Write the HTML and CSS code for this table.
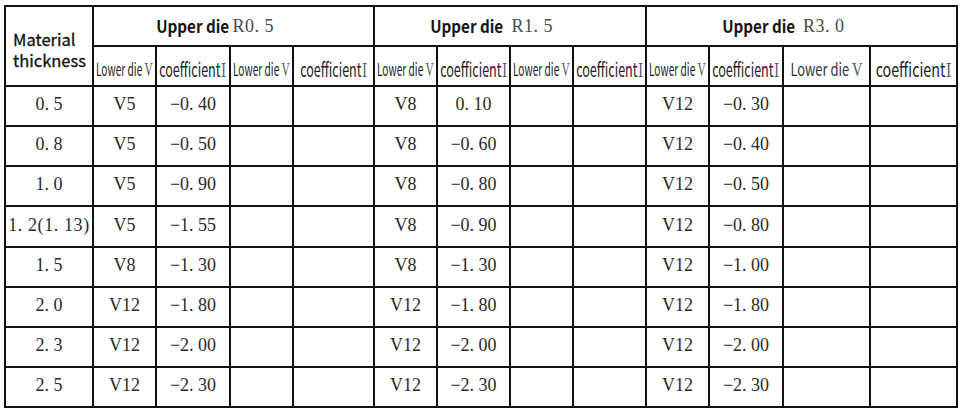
FILE: index.html
```html
<!DOCTYPE html>
<html lang="en">
<head>
<meta charset="utf-8">
<title>Upper die coefficient table</title>
<link rel="stylesheet" href="styles.css">
</head>
<body>
<div class="sheet">
  <div class="cell corner"><div class="corner-text"><div>Material</div><div>thickness</div></div></div>
  <div class="cell top g1"><span class="up">Upper die</span><span class="r">R0. 5</span></div>
  <div class="cell top g2"><span class="up">Upper die</span><span class="r">&nbsp;R1. 5</span></div>
  <div class="cell top g3"><span class="up">Upper die</span><span class="r">&nbsp;R3. 0</span></div>

  <div class="cell sub"><span class="lw">Lower die <i>V</i></span></div>
  <div class="cell sub"><span class="cf">coefficient<i>Ⅰ</i></span></div>
  <div class="cell sub"><span class="lw">Lower die <i>V</i></span></div>
  <div class="cell sub"><span class="cf">coefficient<i>Ⅰ</i></span></div>
  <div class="cell sub"><span class="lw">Lower die <i>V</i></span></div>
  <div class="cell sub"><span class="cf">coefficient<i>Ⅰ</i></span></div>
  <div class="cell sub"><span class="lw">Lower die <i>V</i></span></div>
  <div class="cell sub"><span class="cf">coefficient<i>Ⅰ</i></span></div>
  <div class="cell sub"><span class="lw">Lower die <i>V</i></span></div>
  <div class="cell sub"><span class="cf">coefficient<i>Ⅰ</i></span></div>
  <div class="cell sub wide"><span class="lw">Lower die <i>V</i></span></div>
  <div class="cell sub wide"><span class="cf">coefficient<i>Ⅰ</i></span></div>

  <div class="cell v">0. 5</div><div class="cell v">V5</div><div class="cell v">−0. 40</div><div class="cell"></div><div class="cell"></div>
  <div class="cell v">V8</div><div class="cell v">0. 10</div><div class="cell"></div><div class="cell"></div>
  <div class="cell v">V12</div><div class="cell v">−0. 30</div><div class="cell"></div><div class="cell"></div>

  <div class="cell v">0. 8</div><div class="cell v">V5</div><div class="cell v">−0. 50</div><div class="cell"></div><div class="cell"></div>
  <div class="cell v">V8</div><div class="cell v">−0. 60</div><div class="cell"></div><div class="cell"></div>
  <div class="cell v">V12</div><div class="cell v">−0. 40</div><div class="cell"></div><div class="cell"></div>

  <div class="cell v">1. 0</div><div class="cell v">V5</div><div class="cell v">−0. 90</div><div class="cell"></div><div class="cell"></div>
  <div class="cell v">V8</div><div class="cell v">−0. 80</div><div class="cell"></div><div class="cell"></div>
  <div class="cell v">V12</div><div class="cell v">−0. 50</div><div class="cell"></div><div class="cell"></div>

  <div class="cell v tight">1. 2(1. 13)</div><div class="cell v">V5</div><div class="cell v">−1. 55</div><div class="cell"></div><div class="cell"></div>
  <div class="cell v">V8</div><div class="cell v">−0. 90</div><div class="cell"></div><div class="cell"></div>
  <div class="cell v">V12</div><div class="cell v">−0. 80</div><div class="cell"></div><div class="cell"></div>

  <div class="cell v">1. 5</div><div class="cell v">V8</div><div class="cell v">−1. 30</div><div class="cell"></div><div class="cell"></div>
  <div class="cell v">V8</div><div class="cell v">−1. 30</div><div class="cell"></div><div class="cell"></div>
  <div class="cell v">V12</div><div class="cell v">−1. 00</div><div class="cell"></div><div class="cell"></div>

  <div class="cell v">2. 0</div><div class="cell v">V12</div><div class="cell v">−1. 80</div><div class="cell"></div><div class="cell"></div>
  <div class="cell v">V12</div><div class="cell v">−1. 80</div><div class="cell"></div><div class="cell"></div>
  <div class="cell v">V12</div><div class="cell v">−1. 80</div><div class="cell"></div><div class="cell"></div>

  <div class="cell v">2. 3</div><div class="cell v">V12</div><div class="cell v">−2. 00</div><div class="cell"></div><div class="cell"></div>
  <div class="cell v">V12</div><div class="cell v">−2. 00</div><div class="cell"></div><div class="cell"></div>
  <div class="cell v">V12</div><div class="cell v">−2. 00</div><div class="cell"></div><div class="cell"></div>

  <div class="cell v">2. 5</div><div class="cell v">V12</div><div class="cell v">−2. 30</div><div class="cell"></div><div class="cell"></div>
  <div class="cell v">V12</div><div class="cell v">−2. 30</div><div class="cell"></div><div class="cell"></div>
  <div class="cell v">V12</div><div class="cell v">−2. 30</div><div class="cell"></div><div class="cell"></div>
</div>
</body>
</html>
```
FILE: styles.css
```css
html, body {
  margin: 0;
  padding: 0;
  background: #ffffff;
}

body {
  padding: 5px 0 0 4px;
}

.sheet {
  display: grid;
  width: 954px;
  box-sizing: border-box;
  padding: 2px;
  gap: 2px;
  background: #111111;
  grid-template-columns: 86px 61px 72px 61px 79px 61px 71px 61px 71px 61px 72px 85px 85px;
  grid-template-rows: 38px 38px 38px 38px 38px 39px 38px 38px 38px 38px;
}

.cell {
  background: #ffffff;
  display: flex;
  align-items: center;
  justify-content: center;
  overflow: visible;
  white-space: nowrap;
  color: #1a1a1a;
}

.corner {
  grid-row: 1 / span 2;
  justify-content: flex-start;
  padding: 8px 0 0 7px;
}

.corner-text {
  display: flex;
  flex-direction: column;
  font-family: "Noto Sans CJK SC", "Noto Sans", sans-serif;
  font-size: 16.5px;
  font-weight: 400;
  line-height: 21px;
  color: #111111;
  -webkit-text-stroke: 0.3px #111111;
}

.top {
  grid-column: span 4;
  padding-right: 40px;
}

.up {
  display: inline-block;
  font-family: "Noto Sans CJK SC", "Noto Sans", sans-serif;
  font-weight: 700;
  font-size: 16.5px;
  color: #151515;
  transform: scaleX(0.92);
}

.r {
  font-family: "Liberation Serif", "DejaVu Serif", serif;
  font-size: 18px;
  color: #4a4a4a;
  letter-spacing: 0.5px;
}

.sub {
  padding-top: 4px;
  font-family: "Noto Sans CJK SC", "Noto Sans", sans-serif;
  color: #1e1e1e;
}

.sub i {
  font-style: normal;
  font-family: "Liberation Serif", "DejaVu Serif", serif;
  font-size: 19px;
  color: #555555;
}

.lw {
  display: inline-block;
  font-size: 17px;
  transform: scaleX(0.6);
}

.cf {
  display: inline-block;
  font-size: 19px;
  transform: scaleX(0.66);
}

.cf i {
  font-family: "DejaVu Serif", "Noto Sans CJK SC", serif;
  font-size: 18px;
  margin-left: 1px;
}

.wide .lw {
  font-size: 17px;
  transform: scaleX(0.76);
  color: #333333;
}

.wide .cf {
  transform: scaleX(0.75);
}

.v {
  padding-bottom: 3px;
  font-family: "Liberation Serif", "DejaVu Serif", serif;
  font-size: 18px;
  color: #2a2a2a;
}

.tight {
  letter-spacing: 0.6px;
}
```
